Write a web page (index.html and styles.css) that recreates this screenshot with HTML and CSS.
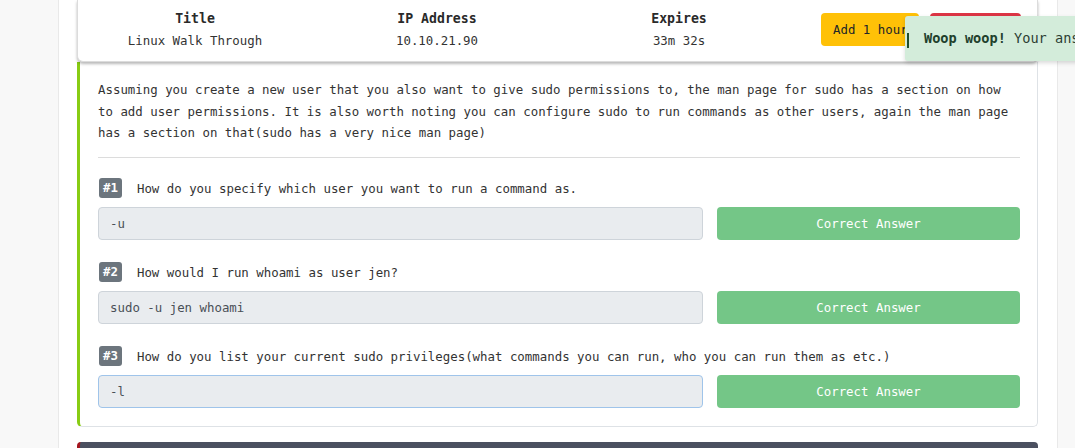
FILE: index.html
```html
<!DOCTYPE html>
<html>
<head>
<meta charset="utf-8">
<link rel="stylesheet" href="styles.css">
</head>
<body>
<div class="page">
  <div class="side side-left"></div>
  <div class="main">
    <div class="room-bar">
      <div class="info-col"><div class="info-head">Title</div><div class="info-val">Linux Walk Through</div></div>
      <div class="info-col"><div class="info-head">IP Address</div><div class="info-val">10.10.21.90</div></div>
      <div class="info-col"><div class="info-head">Expires</div><div class="info-val">33m 32s</div></div>
      <div class="actions">
        <button class="btn btn-warning">Add 1 hour</button>
        <button class="btn btn-danger">Terminate</button>
      </div>
    </div>
    <div class="task-card">
      <p class="task-text">Assuming you create a new user that you also want to give sudo permissions to, the man page for sudo has a section on how to add user permissions. It is also worth noting you can configure sudo to run commands as other users, again the man page has a section on that(sudo has a very nice man page)</p>
      <hr class="divider">
      <div class="question">
        <div class="q-label"><span class="badge">#1</span><span>How do you specify which user you want to run a command as.</span></div>
        <div class="q-row">
          <div class="answer">-u</div>
          <button class="btn-correct">Correct Answer</button>
        </div>
      </div>
      <div class="question">
        <div class="q-label"><span class="badge">#2</span><span>How would I run whoami as user jen?</span></div>
        <div class="q-row">
          <div class="answer">sudo -u jen whoami</div>
          <button class="btn-correct">Correct Answer</button>
        </div>
      </div>
      <div class="question">
        <div class="q-label"><span class="badge">#3</span><span>How do you list your current sudo privileges(what commands you can run, who you can run them as etc.)</span></div>
        <div class="q-row">
          <div class="answer focused">-l</div>
          <button class="btn-correct">Correct Answer</button>
        </div>
      </div>
    </div>
    <div class="next-task"></div>
  </div>
  <div class="side side-right"></div>
</div>
<div class="toast"><span class="toast-caret"></span><b>Woop woop!</b> Your answer is correct</div>
</body>
</html>
```
FILE: styles.css
```css
html, body {
  margin: 0;
  padding: 0;
  height: 100%;
  overflow: hidden;
  background: #fff;
  font-family: "DejaVu Sans Mono", "Liberation Mono", monospace;
  font-size: 12.4px;
  color: #333;
}
.page {
  display: flex;
  height: 448px;
}
.side {
  background: #f8f8f8;
}
.side-left {
  width: 58px;
  border-right: 1px solid #e9e9e9;
}
.side-right {
  width: 17px;
  border-left: 1px solid #e9e9e9;
}
.main {
  flex: 1;
  padding: 0 19px 0 18px;
  display: flex;
  flex-direction: column;
}
.main > * {
  flex-shrink: 0;
}
.room-bar {
  position: relative;
  z-index: 2;
  height: 61px;
  background: #fff;
  border: 1px solid #dcdcdc;
  border-top: none;
  border-radius: 0 0 6px 6px;
  box-shadow: 0 2px 3px rgba(0,0,0,0.28);
  display: grid;
  grid-template-columns: 234px 250px 234px 1fr;
  align-items: start;
}
.info-col {
  text-align: center;
  padding-top: 10px;
}
.info-head {
  font-weight: bold;
  font-size: 13.2px;
  line-height: 18px;
  color: #2a2a2a;
}
.info-val {
  line-height: 20px;
  margin-top: 3px;
  color: #333;
}
.actions {
  display: flex;
  gap: 11px;
  padding: 13px 0 0 25px;
}
.btn {
  font-family: inherit;
  font-size: 12.4px;
  border: none;
  border-radius: 4px;
  height: 33px;
  padding: 0;
  white-space: nowrap;
  flex-shrink: 0;
}
.btn-warning {
  background: #ffc107;
  color: #212529;
  width: 98px;
  text-align: left;
  padding-left: 12px;
}
.btn-danger {
  background: #dc3545;
  color: #fff;
  width: 91px;
}
.task-card {
  border: 1px solid #dee2e6;
  border-top: none;
  border-left: 3px solid #88cc14;
  border-radius: 0 0 5px 5px;
  padding: 17px 17px 18px 18px;
}
.task-text {
  margin: 0;
  line-height: 21.5px;
  color: #333;
}
.divider {
  border: none;
  border-top: 1px solid #dcdcdc;
  margin: 13px 0 20px;
}
.question + .question {
  margin-top: 22px;
}
.q-label {
  display: flex;
  align-items: center;
  gap: 15px;
  height: 21px;
  color: #333;
}
.badge {
  background: #6c757d;
  color: #fff;
  font-weight: bold;
  font-size: 12.4px;
  border-radius: 3px;
  padding: 0 4px;
  height: 20px;
  line-height: 20px;
  margin-left: 1px;
}
.q-row {
  display: grid;
  grid-template-columns: 605px 1fr;
  gap: 14px;
  margin-top: 8px;
}
.answer {
  height: 31px;
  line-height: 31px;
  background: #e9ecef;
  border: 1px solid #ced4da;
  border-radius: 4px;
  padding: 0 11px;
  color: #495057;
}
.answer.focused {
  border-color: #9fc4ea;
}
.btn-correct {
  height: 33px;
  border: none;
  border-radius: 4px;
  background: #74c687;
  color: #fff;
  font-family: inherit;
  font-size: 12.4px;
}
.next-task {
  margin-top: 15px;
  height: 20px;
  background: #4b5060;
  border-left: 3px solid #a3161f;
  border-radius: 4px 4px 0 0;
}
.toast {
  position: absolute;
  top: 16px;
  left: 905px;
  width: 300px;
  height: 45px;
  box-sizing: border-box;
  background: #d3ecda;
  color: #2c3e33;
  font-size: 13.6px;
  line-height: 45px;
  padding-left: 19px;
  border-radius: 3px;
  box-shadow: 0 2px 4px rgba(0,0,0,0.15);
  white-space: nowrap;
  z-index: 5;
}
.toast b {
  color: #21402c;
}
.toast-caret {
  position: absolute;
  left: 2px;
  top: 17px;
  width: 2px;
  height: 15px;
  background: #1e4d2b;
}
```
